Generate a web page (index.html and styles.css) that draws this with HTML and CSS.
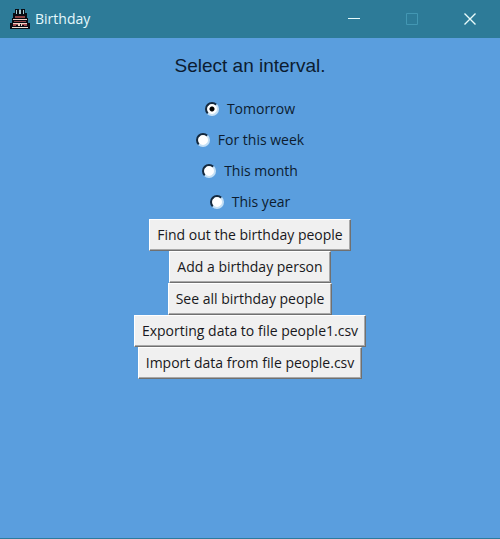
FILE: index.html
```html
<!DOCTYPE html>
<html lang="en">
<head>
<meta charset="utf-8">
<meta name="viewport" content="width=device-width, initial-scale=1">
<title>Birthday</title>
<link rel="stylesheet" href="styles.css">
</head>
<body>
<header class="titlebar">
  <svg class="app-icon" viewBox="0 0 20 20" shape-rendering="crispEdges" aria-hidden="true">
    <path fill="#080c14" d="M5 0h4v5H5zM11 0h4v5h-4zM3 4h14v6H3zM2 9h16v6H2zM0 14h20v6H0z"/>
    <path fill="#a9cbd1" d="M6 1h1v4H6zM13 1h1v4h-1zM9 1h2v4H9z"/>
    <path fill="#8c4346" d="M5 7h10v2H5zM4 12h12v1H4z"/>
    <path fill="#f0d0c4" d="M3 10h14v1H3zM3 14h14v1H3zM8 15h2v2H8zM11 15h1v2h-1z"/>
    <path fill="#a34c50" d="M3 15h3v2H3zM14 15h3v2h-3zM6 15h2v1H6zM12 15h2v1h-2z"/>
    <path fill="#eee0d8" d="M2 18h16v1H2z"/>
  </svg>
  <h1 class="caption">Birthday</h1>
  <div class="window-controls">
    <button class="control" type="button" aria-label="Minimize">
      <svg viewBox="0 0 12 12" aria-hidden="true"><path d="M0 5.5h12"/></svg>
    </button>
    <button class="control" type="button" aria-label="Maximize" disabled>
      <svg viewBox="0 0 12 12" aria-hidden="true"><path d="M.5.5h11v11H.5z"/></svg>
    </button>
    <button class="control" type="button" aria-label="Close">
      <svg viewBox="0 0 12 12" aria-hidden="true"><path stroke-width="1.4" d="M.5.5l11 11M11.5.5l-11 11"/></svg>
    </button>
  </div>
</header>
<main class="content">
  <h2 class="heading" id="interval-heading">Select an interval.</h2>
  <div class="options" role="radiogroup" aria-labelledby="interval-heading">
    <label class="option"><input class="radio" type="radio" name="interval" checked>Tomorrow</label>
    <label class="option"><input class="radio" type="radio" name="interval">For this week</label>
    <label class="option"><input class="radio" type="radio" name="interval">This month</label>
    <label class="option"><input class="radio" type="radio" name="interval">This year</label>
  </div>
  <div class="actions">
    <button class="action" type="button">Find out the birthday people</button>
    <button class="action" type="button">Add a birthday person</button>
    <button class="action" type="button">See all birthday people</button>
    <button class="action" type="button">Exporting data to file people1.csv</button>
    <button class="action" type="button">Import data from file people.csv</button>
  </div>
</main>
</body>
</html>
```
FILE: styles.css
```css
* {
  box-sizing: border-box;
}

body {
  display: flex;
  flex-direction: column;
  min-height: 100vh;
  margin: 0;
  background: #5a9ede;
  border-bottom: 1px solid #2d7b9c;
  color: #0c1c30;
  font: 14px/20px "Open Sans", "Noto Sans", sans-serif;
}

.titlebar {
  display: flex;
  align-items: center;
  height: 38px;
  padding: 0 1px 0 10px;
  background: #2d7b98;
  color: #e4f8fc;
}

.app-icon {
  width: 20px;
  height: 20px;
}

.caption {
  margin: 0 0 0 5px;
  font-size: 14px;
  font-weight: 400;
}

.window-controls {
  display: flex;
  align-self: stretch;
  margin-left: auto;
}

.control {
  display: grid;
  place-items: center;
  width: 58px;
  padding: 0;
  border: 0;
  background: none;
  color: #e8fbfb;
}

.control:disabled {
  color: #4397b3;
}

.control svg {
  width: 12px;
  height: 12px;
  fill: none;
  stroke: currentColor;
}

.content {
  display: flex;
  flex: 1;
  flex-direction: column;
  align-items: center;
  padding-top: 16px;
}

.heading {
  margin: 0 0 15px;
  font: 400 19px/24px "Liberation Sans", Arial, sans-serif;
}

.options,
.actions {
  display: flex;
  flex-direction: column;
  align-items: center;
}

.options {
  margin-bottom: 2px;
}

.option {
  display: flex;
  align-items: center;
  gap: 8px;
  height: 31px;
}

.radio {
  appearance: none;
  width: 14px;
  height: 14px;
  margin: 0;
  border: 2px solid;
  border-color: #14293e #c4e0f6 #c4e0f6 #14293e;
  border-radius: 50%;
  background: #fff;
}

.radio:checked {
  background: radial-gradient(circle, #000 2px, #fff 3px);
}

.action {
  height: 32px;
  padding: 0 7px;
  border: 1px solid;
  border-color: #fff #707070 #707070 #fff;
  box-shadow: inset -1px -1px #a8a8a8;
  background: #f0f0f0;
  color: #181820;
  font: inherit;
}
```
